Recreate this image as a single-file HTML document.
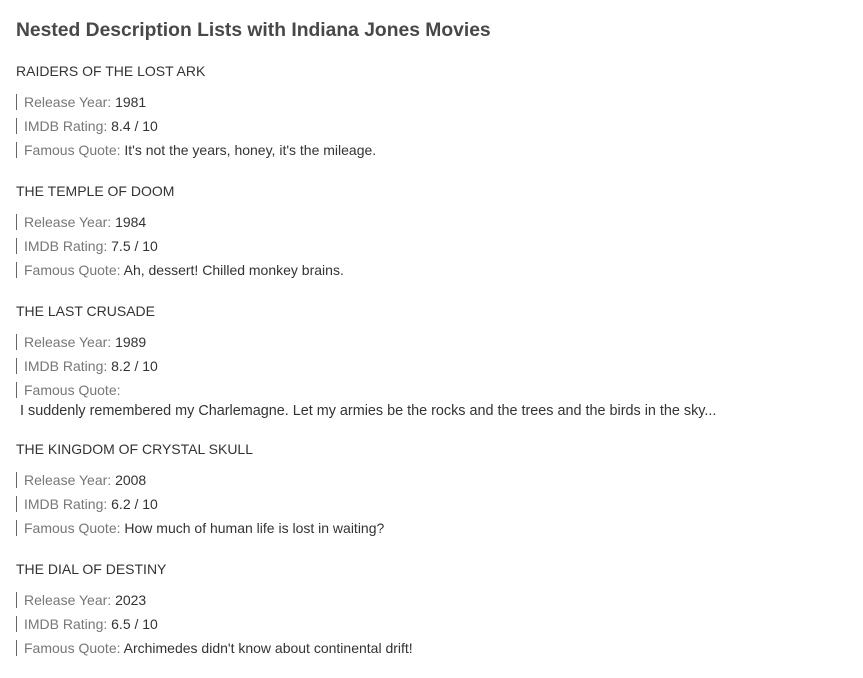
<!DOCTYPE html>
<html><head><meta charset="utf-8"><style>
body{margin:0;background:#fff;font-family:"Liberation Sans",sans-serif;color:#333;width:863px;height:678px;position:relative;overflow:hidden}
.t{position:absolute;left:16px;top:20px;font-size:19.3px;font-weight:bold;color:#484848;margin:0;white-space:nowrap}
.h{position:absolute;left:16px;font-size:14px;color:#333;white-space:nowrap}
.r{position:absolute;left:16px;font-size:14px;white-space:nowrap;border-left:1px solid #666;padding-left:7px;line-height:16px}
.r span{color:#777}
.q{position:absolute;left:20px;font-size:14.4px;white-space:nowrap}
</style></head><body>
<h1 class="t">Nested Description Lists with Indiana Jones Movies</h1>

<div class="h" style="top:63px">RAIDERS OF THE LOST ARK</div>
<div class="r" style="top:94px"><span>Release Year:</span> 1981</div>
<div class="r" style="top:118px"><span>IMDB Rating:</span> 8.4 / 10</div>
<div class="r" style="top:142px"><span>Famous Quote:</span> It's not the years, honey, it's the mileage.</div>

<div class="h" style="top:183px">THE TEMPLE OF DOOM</div>
<div class="r" style="top:214px"><span>Release Year:</span> 1984</div>
<div class="r" style="top:238px"><span>IMDB Rating:</span> 7.5 / 10</div>
<div class="r" style="top:262px"><span>Famous Quote:</span> Ah, dessert! Chilled monkey brains.</div>

<div class="h" style="top:303px">THE LAST CRUSADE</div>
<div class="r" style="top:334px"><span>Release Year:</span> 1989</div>
<div class="r" style="top:358px"><span>IMDB Rating:</span> 8.2 / 10</div>
<div class="r" style="top:382px"><span>Famous Quote:</span></div>
<div class="q" style="top:403px">I suddenly remembered my Charlemagne. Let my armies be the rocks and the trees and the birds in the sky...</div>

<div class="h" style="top:441px">THE KINGDOM OF CRYSTAL SKULL</div>
<div class="r" style="top:472px"><span>Release Year:</span> 2008</div>
<div class="r" style="top:496px"><span>IMDB Rating:</span> 6.2 / 10</div>
<div class="r" style="top:520px"><span>Famous Quote:</span> How much of human life is lost in waiting?</div>

<div class="h" style="top:561px">THE DIAL OF DESTINY</div>
<div class="r" style="top:592px"><span>Release Year:</span> 2023</div>
<div class="r" style="top:616px"><span>IMDB Rating:</span> 6.5 / 10</div>
<div class="r" style="top:640px"><span>Famous Quote:</span> Archimedes didn't know about continental drift!</div>
</body></html>
